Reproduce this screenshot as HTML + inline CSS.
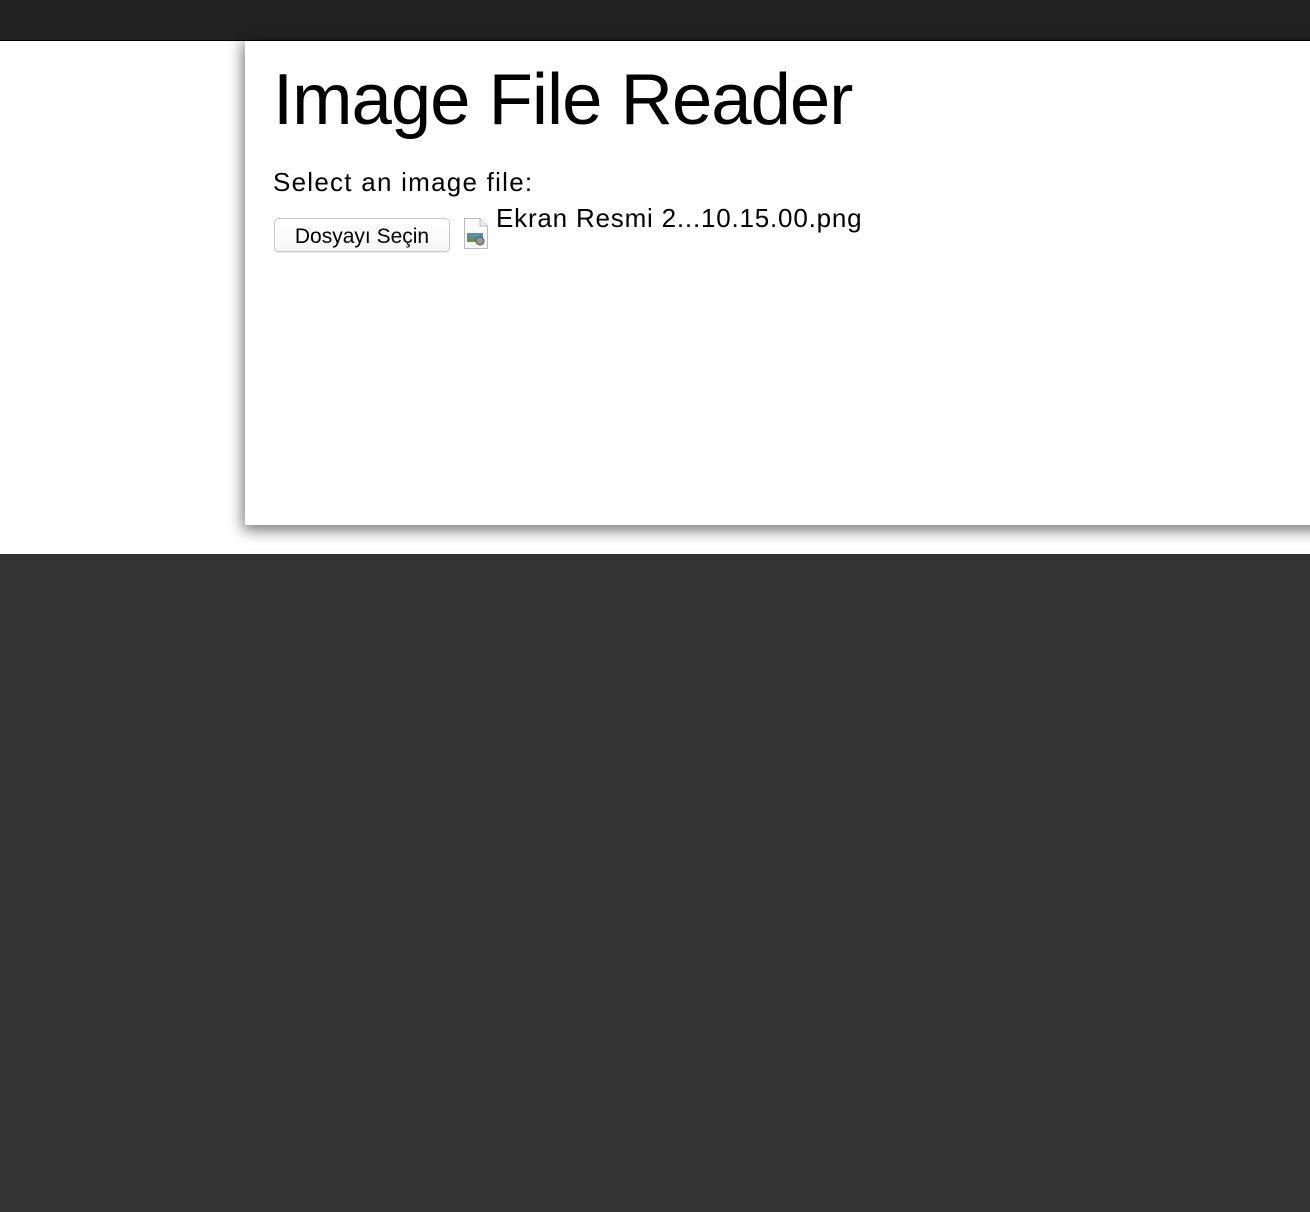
<!DOCTYPE html>
<html><head><meta charset="utf-8">
<style>
html,body{margin:0;padding:0;width:1310px;height:1212px;overflow:hidden;background:#333;font-family:"Liberation Sans",sans-serif;}
.top{position:absolute;left:0;top:0;width:1310px;height:40px;background:#222;border-bottom:1px solid #000;}
.white{position:absolute;left:0;top:41px;width:1310px;height:513px;background:#fff;}
.panel{position:absolute;left:245px;top:41px;width:1080px;height:484px;background:#fff;box-shadow:0 3px 14px 2px rgba(0,0,0,0.55);}
h1{position:absolute;left:273px;top:58px;margin:0;font-size:72.5px;font-weight:normal;line-height:84px;color:#000;letter-spacing:-1px;white-space:nowrap;}
.lbl{position:absolute;left:273px;top:167px;font-size:26px;color:#000;letter-spacing:1.25px;white-space:nowrap;}
.btn{position:absolute;left:274px;top:218px;width:174px;height:32px;border:1px solid #c8c8c8;border-radius:5px;background:linear-gradient(#fff,#f6f6f6);box-shadow:0 1px 1px rgba(0,0,0,0.1);font-size:21px;line-height:36px;text-align:center;color:#000;box-sizing:content-box;}
.icon{position:absolute;left:463px;top:218px;}
.fn{position:absolute;left:496px;top:203px;font-size:26px;color:#000;letter-spacing:0.8px;white-space:nowrap;}
</style></head><body>
<div class="top"></div>
<div class="white"></div>
<div class="panel"></div>
<h1>Image File Reader</h1>
<div class="lbl">Select an image file:</div>
<div class="btn">Dosyayı Seçin</div>
<svg class="icon" width="26" height="32" viewBox="0 0 26 32">
<path d="M1.5 0.5H17L24.5 8V30.5H1.5Z" fill="#fafafa" stroke="#bbb"/>
<path d="M17 0.5V8H24.5" fill="#eee" stroke="#bbb"/>
<rect x="4" y="15" width="16" height="9" fill="#5a8fb5"/>
<rect x="4" y="19" width="16" height="5" fill="#6a8f5a"/>
<circle cx="17" cy="23" r="4" fill="#999" stroke="#555"/>
</svg>
<div class="fn">Ekran Resmi 2...10.15.00.png</div>
</body></html>
